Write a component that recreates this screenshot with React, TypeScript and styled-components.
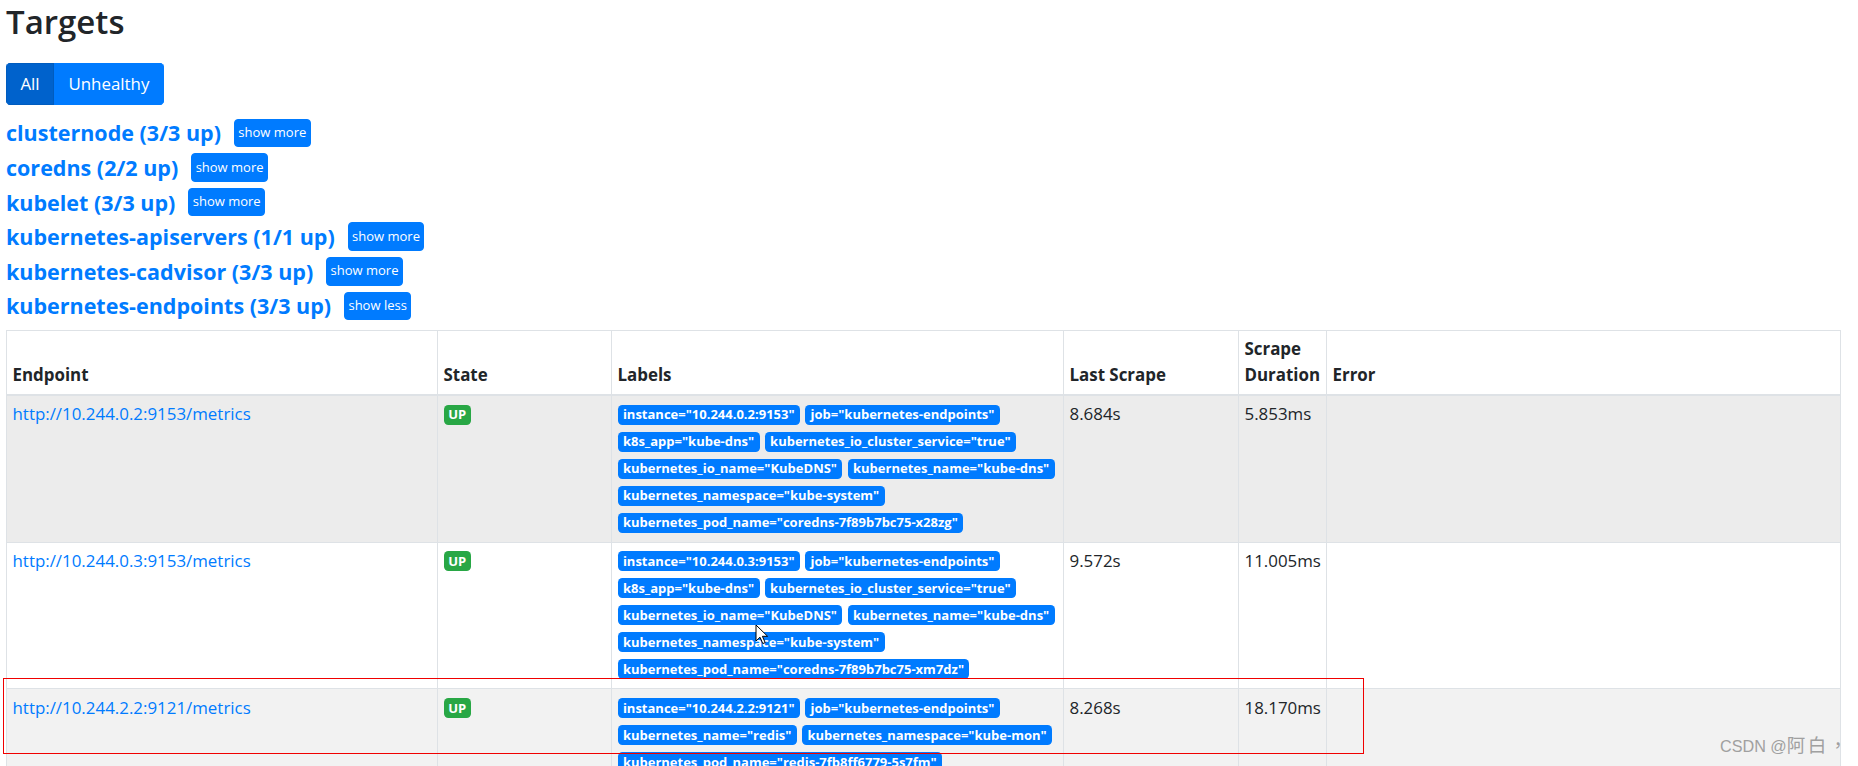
import React from "react";
import styled, { createGlobalStyle, css } from "styled-components";

const GlobalStyle = createGlobalStyle`
  html, body {
    margin: 0;
    padding: 0;
    background: #ffffff;
  }
  body {
    font-family: "Open Sans", "Noto Sans", sans-serif;
    font-size: 16.9px;
    line-height: 26.4px;
    color: #212529;
  }
  * { box-sizing: border-box; }
`;

const Page = styled.div`
  position: relative;
  padding: 1px 18px 0 6px;
`;

const Title = styled.h2`
  margin: 0 0 20px 0;
  font-size: 33px;
  line-height: 42px;
  font-weight: 600;
  color: #212529;
`;

const FilterGroup = styled.div`
  display: inline-flex;
  border-radius: 4.4px;
  overflow: hidden;
`;

const FilterButton = styled.button<{ $active?: boolean }>`
  font-family: inherit;
  font-size: 16.9px;
  line-height: 26.4px;
  padding: 6.6px 13.4px;
  border: 1px solid ${(p) => (p.$active ? "#005cbf" : "#007bff")};
  background: ${(p) => (p.$active ? "#0062cc" : "#007bff")};
  color: #ffffff;
  cursor: pointer;
`;

const PoolList = styled.div`
  display: flex;
  flex-direction: column;
  margin: 11px 0 6.5px 0;
`;

const PoolHead = styled.div`
  display: flex;
  align-items: center;
  gap: 13px;
  height: 34.6px;
`;

const PoolLink = styled.a`
  font-size: 21.5px;
  line-height: 28px;
  font-weight: 700;
  color: #007bff;
  text-decoration: none;
  padding-top: 1px;
`;

const ToggleButton = styled.button`
  font-family: inherit;
  font-size: 13px;
  line-height: 19.8px;
  height: 28.7px;
  padding: 3.4px 3.4px;
  border: 1px solid #007bff;
  border-radius: 4px;
  background: #007bff;
  color: #ffffff;
  cursor: pointer;
`;

const Table = styled.table`
  width: 1834px;
  table-layout: fixed;
  border-collapse: collapse;
`;

const HeadCell = styled.th`
  text-align: left;
  vertical-align: bottom;
  font-weight: 700;
  padding: 5.3px 5.5px;
  border: 1px solid #dee2e6;
  border-bottom: 2px solid #dee2e6;
`;

type Tone = "hover" | "plain" | "striped";

const toneColor: Record<Tone, string> = {
  hover: "#ececec",
  plain: "#ffffff",
  striped: "#f2f2f2",
};

const Row = styled.tr<{ $tone: Tone }>`
  background: ${(p) => toneColor[p.$tone]};
`;

const Cell = styled.td`
  vertical-align: top;
  padding: 5.3px 5.5px;
  border: 1px solid #dee2e6;
`;

const EndpointLink = styled.a`
  color: #007bff;
  text-decoration: none;
`;

const BadgeLine = styled.div`
  display: flex;
  align-items: center;
  gap: 5.2px;
  height: 27px;
  white-space: nowrap;
`;

const Badge = styled.span<{ $variant: "primary" | "success" }>`
  display: inline-block;
  font-size: 13px;
  font-weight: 700;
  line-height: 13px;
  padding: 3.5px 5.4px;
  border-radius: 4.4px;
  color: #ffffff;
  ${(p) =>
    p.$variant === "success"
      ? css`
          background: #28a745;
          padding: 3.5px 4.8px;
        `
      : css`
          background: #007bff;
        `}
`;

const Annotation = styled.div`
  position: absolute;
  left: 3px;
  top: 678px;
  width: 1361px;
  height: 76px;
  border: 1px solid #f00000;
  pointer-events: none;
`;

const Pointer = styled.svg`
  position: absolute;
  left: 755px;
  top: 624px;
  pointer-events: none;
`;

const Watermark = styled.div`
  position: absolute;
  left: 1720px;
  top: 733px;
  font-family: "Liberation Sans", "Noto Sans CJK TC", sans-serif;
  font-size: 16.2px;
  line-height: 22px;
  color: #a0a0a0;
  white-space: nowrap;
  pointer-events: none;
`;

const WatermarkAuthor = styled.span`
  font-family: "Noto Sans CJK TC", sans-serif;
  font-size: 18.5px;
  letter-spacing: 2.5px;
`;

const pools = [
  { name: "clusternode", up: 3, total: 3, open: false },
  { name: "coredns", up: 2, total: 2, open: false },
  { name: "kubelet", up: 3, total: 3, open: false },
  { name: "kubernetes-apiservers", up: 1, total: 1, open: false },
  { name: "kubernetes-cadvisor", up: 3, total: 3, open: false },
  { name: "kubernetes-endpoints", up: 3, total: 3, open: true },
];

const columns = [
  { title: "Endpoint", width: 431 },
  { title: "State", width: 174 },
  { title: "Labels", width: 452 },
  { title: "Last Scrape", width: 175 },
  { title: "Scrape Duration", width: 88 },
  { title: "Error", width: 514 },
];

const targets: {
  endpoint: string;
  labels: string[][];
  lastScrape: string;
  duration: string;
  tone: Tone;
}[] = [
  {
    endpoint: "http://10.244.0.2:9153/metrics",
    labels: [
      ['instance="10.244.0.2:9153"', 'job="kubernetes-endpoints"'],
      ['k8s_app="kube-dns"', 'kubernetes_io_cluster_service="true"'],
      ['kubernetes_io_name="KubeDNS"', 'kubernetes_name="kube-dns"'],
      ['kubernetes_namespace="kube-system"'],
      ['kubernetes_pod_name="coredns-7f89b7bc75-x28zg"'],
    ],
    lastScrape: "8.684s",
    duration: "5.853ms",
    tone: "hover",
  },
  {
    endpoint: "http://10.244.0.3:9153/metrics",
    labels: [
      ['instance="10.244.0.3:9153"', 'job="kubernetes-endpoints"'],
      ['k8s_app="kube-dns"', 'kubernetes_io_cluster_service="true"'],
      ['kubernetes_io_name="KubeDNS"', 'kubernetes_name="kube-dns"'],
      ['kubernetes_namespace="kube-system"'],
      ['kubernetes_pod_name="coredns-7f89b7bc75-xm7dz"'],
    ],
    lastScrape: "9.572s",
    duration: "11.005ms",
    tone: "plain",
  },
  {
    endpoint: "http://10.244.2.2:9121/metrics",
    labels: [
      ['instance="10.244.2.2:9121"', 'job="kubernetes-endpoints"'],
      ['kubernetes_name="redis"', 'kubernetes_namespace="kube-mon"'],
      ['kubernetes_pod_name="redis-7fb8ff6779-5s7fm"'],
    ],
    lastScrape: "8.268s",
    duration: "18.170ms",
    tone: "striped",
  },
];

export default function App() {
  return (
    <>
      <GlobalStyle />
      <Page>
        <Title>Targets</Title>
        <FilterGroup>
          <FilterButton $active>All</FilterButton>
          <FilterButton>Unhealthy</FilterButton>
        </FilterGroup>
        <PoolList>
          {pools.map((p) => (
            <PoolHead key={p.name}>
              <PoolLink href={`#pool-${p.name}`}>
                {p.name} ({p.up}/{p.total} up)
              </PoolLink>
              <ToggleButton>{p.open ? "show less" : "show more"}</ToggleButton>
            </PoolHead>
          ))}
        </PoolList>
        <Table>
          <colgroup>
            {columns.map((c) => (
              <col key={c.title} style={{ width: c.width }} />
            ))}
          </colgroup>
          <thead>
            <tr>
              {columns.map((c) => (
                <HeadCell key={c.title}>{c.title}</HeadCell>
              ))}
            </tr>
          </thead>
          <tbody>
            {targets.map((t) => (
              <Row key={t.endpoint} $tone={t.tone}>
                <Cell>
                  <EndpointLink href={t.endpoint}>{t.endpoint}</EndpointLink>
                </Cell>
                <Cell>
                  <BadgeLine>
                    <Badge $variant="success">UP</Badge>
                  </BadgeLine>
                </Cell>
                <Cell>
                  {t.labels.map((line, i) => (
                    <BadgeLine key={i}>
                      {line.map((l) => (
                        <Badge key={l} $variant="primary">
                          {l}
                        </Badge>
                      ))}
                    </BadgeLine>
                  ))}
                </Cell>
                <Cell>{t.lastScrape}</Cell>
                <Cell>{t.duration}</Cell>
                <Cell></Cell>
              </Row>
            ))}
          </tbody>
        </Table>
        <Annotation />
        <Pointer width="14" height="22" viewBox="0 0 14 22">
          <path
            d="M1 1 L1 17 L5 13.2 L7.8 19.6 L10.2 18.6 L7.4 12.3 L12.6 12.3 Z"
            fill="#ffffff"
            stroke="#000000"
            strokeWidth="1"
            strokeLinejoin="miter"
          />
        </Pointer>
        <Watermark>
          CSDN @<WatermarkAuthor>阿白，</WatermarkAuthor>
        </Watermark>
      </Page>
    </>
  );
}
